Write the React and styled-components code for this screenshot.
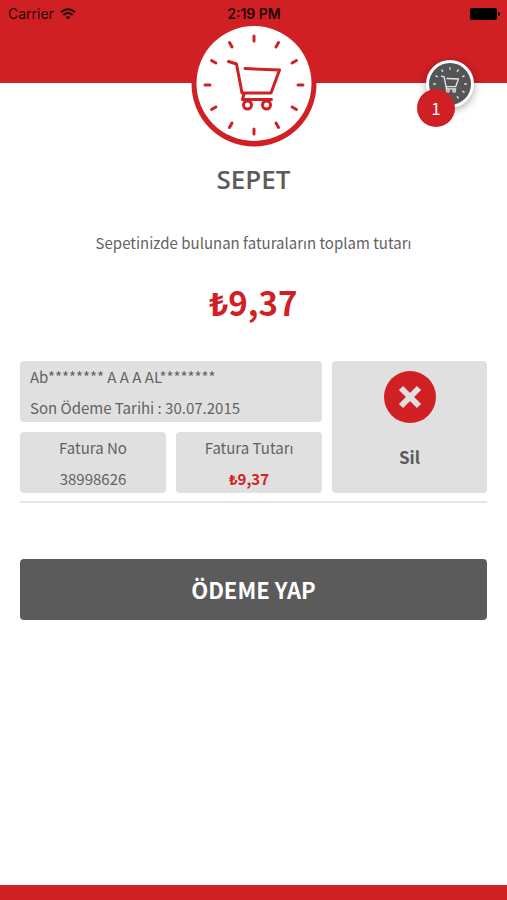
import React from "react";
import styled, { createGlobalStyle } from "styled-components";

const red = "#d12023";
const grey = "#5b5b5b";
const panel = "#e0e0e0";

const GlobalStyle = createGlobalStyle`
  *, *::before, *::after { box-sizing: border-box; }
  body {
    margin: 0;
    background: #fff;
    color: #636363;
    font-family: "Noto Sans CJK SC", "Noto Sans", sans-serif;
  }
  h1, p { margin: 0; font-weight: 400; }
  button { border: 0; padding: 0; font: inherit; color: inherit; cursor: pointer; }
`;

const Screen = styled.div`
  min-height: 100vh;
  display: flex;
  flex-direction: column;
`;

const Header = styled.header`
  position: relative;
  height: 83px;
  background: ${red};
`;

const StatusBar = styled.div`
  display: grid;
  grid-template-columns: 1fr auto 1fr;
  align-items: center;
  height: 28px;
  padding: 0 7px 0 8px;
  color: #1c0506;
  font: 400 14px/20px Inter, sans-serif;
`;

const Carrier = styled.span`
  display: flex;
  align-items: center;
  gap: 6px;
`;

const Time = styled.span`
  font-weight: 600;
`;

const BatteryIcon = styled.svg`
  justify-self: end;
`;

const Emblem = styled.svg`
  position: absolute;
  top: 21px;
  left: 50%;
  transform: translateX(-50%);
`;

const CartButton = styled.button`
  position: absolute;
  top: 60px;
  right: 33px;
  width: 48px;
  height: 48px;
  border: 3px solid #fff;
  border-radius: 50%;
  background: #555;
  box-shadow: 0 2px 8px rgba(0, 0, 0, 0.35);
`;

const CartIcon = styled.svg`
  display: block;
`;

const Badge = styled.span`
  position: absolute;
  top: 26px;
  left: -12px;
  width: 38px;
  height: 38px;
  border-radius: 50%;
  background: ${red};
  color: #fff;
  font-size: 17px;
  line-height: 38px;
  text-align: center;
`;

const Content = styled.main`
  flex: 1;
  display: flex;
  flex-direction: column;
  padding: 80px 20px 24px;
`;

const Title = styled.h1`
  color: ${grey};
  font: 600 26px/32px "Open Sans", sans-serif;
  text-align: center;
`;

const Summary = styled.p`
  margin-top: 36px;
  font-size: 15px;
  line-height: 24px;
  text-align: center;
`;

const Total = styled.p`
  margin-top: 23px;
  color: ${red};
  font-size: 33px;
  font-weight: 700;
  line-height: 48px;
  text-align: center;
`;

const Invoice = styled.section`
  display: grid;
  grid-template-columns: 146fr 146fr 155fr;
  gap: 10px;
  margin-top: 35px;
  padding-bottom: 8px;
  border-bottom: 2px solid #e6e6e6;
`;

const Cell = styled.div`
  grid-column: span ${(p) => p.$span || 1};
  padding: 0 10px;
  border-radius: 4px;
  background: ${panel};
  font-size: 15px;
  line-height: 31px;
  height: 61px;
  text-align: ${(p) => (p.$span ? "left" : "center")};
`;

const Amount = styled.p`
  color: ${red};
  font-weight: 700;
`;

const DeleteButton = styled.button`
  grid-column: 3;
  grid-row: 1 / span 2;
  display: flex;
  flex-direction: column;
  align-items: center;
  gap: 22px;
  padding-top: 10px;
  border-radius: 4px;
  background: ${panel};
  color: ${grey};
  font-size: 17px;
  font-weight: 700;
  line-height: 24px;
`;

const PayButton = styled.button`
  height: 61px;
  margin-top: 56px;
  padding-bottom: 2px;
  border-radius: 4px;
  background: ${grey};
  color: #fff;
  font-size: 22px;
  font-weight: 700;
  line-height: 32px;
`;

const Footer = styled.footer`
  height: 15px;
  background: ${red};
`;

const angles = Array.from({ length: 12 }, (_, i) => i * 30);

function CartClock({ weight = 3 }) {
  return (
    <g fill="none" stroke="currentColor" strokeWidth={weight} strokeLinecap="round" strokeLinejoin="round">
      <g>
        {angles.map((a) => (
          <path key={a} d="M0 -49V-44" transform={`rotate(${a})`} />
        ))}
      </g>
      <path d="M-25.500 -23.500L-17.500 -21L-12 8H17L25.500 -15L-9 -16.500" />
      <path d="M-10 9L-11.500 14.500H17.500" />
      <circle cx="-6.500" cy="20" r="4" />
      <circle cx="12.500" cy="20" r="4" />
    </g>
  );
}

export default function App() {
  return (
    <>
      <GlobalStyle />
      <Screen>
        <Header>
          <StatusBar>
            <Carrier>
              Carrier
              <svg width="16" height="12" viewBox="0 0 16 12" fill="none" stroke="currentColor" strokeWidth="1.9" aria-hidden="true">
                <path d="M1 4.200Q8 -1.800 15 4.200M3.500 7Q8 3 12.500 7" />
                <path d="M5.700 9.200Q8 7 10.300 9.200L8 11.600Z" fill="currentColor" stroke="none" />
              </svg>
            </Carrier>
            <Time>2:19 PM</Time>
            <BatteryIcon width="30" height="12" viewBox="0 0 30 12" fill="#000" aria-hidden="true">
              <rect width="27" height="12" rx="2" />
              <path d="M28 4Q30 4 30 6T28 8Z" />
            </BatteryIcon>
          </StatusBar>
          <Emblem width="126" height="126" viewBox="-63 -63 126 126" aria-hidden="true">
            <circle r="62.500" fill={red} />
            <circle r="57.500" cy="-0.500" fill="#fff" />
            <g color={red} transform="translate(0 1)">
              <CartClock />
            </g>
          </Emblem>
          <CartButton type="button" aria-label="Sepet, 1 fatura">
            <CartIcon width="42" height="42" viewBox="-63 -63 126 126" color="#e4e4e4" aria-hidden="true">
              <CartClock weight={4} />
            </CartIcon>
            <Badge>1</Badge>
          </CartButton>
        </Header>
        <Content>
          <Title>SEPET</Title>
          <Summary>Sepetinizde bulunan faturaların toplam tutarı</Summary>
          <Total>₺9,37</Total>
          <Invoice>
            <Cell $span={2}>
              <p>Ab******** A A A AL********</p>
              <p>Son Ödeme Tarihi : 30.07.2015</p>
            </Cell>
            <Cell>
              <p>Fatura No</p>
              <p>38998626</p>
            </Cell>
            <Cell>
              <p>Fatura Tutarı</p>
              <Amount>₺9,37</Amount>
            </Cell>
            <DeleteButton type="button">
              <svg width="52" height="52" viewBox="0 0 52 52" aria-hidden="true">
                <circle cx="26" cy="26" r="26" fill={red} />
                <path d="M17 17L35 35M35 17L17 35" stroke={panel} strokeWidth="6" />
              </svg>
              Sil
            </DeleteButton>
          </Invoice>
          <PayButton type="button">ÖDEME YAP</PayButton>
        </Content>
        <Footer />
      </Screen>
    </>
  );
}
